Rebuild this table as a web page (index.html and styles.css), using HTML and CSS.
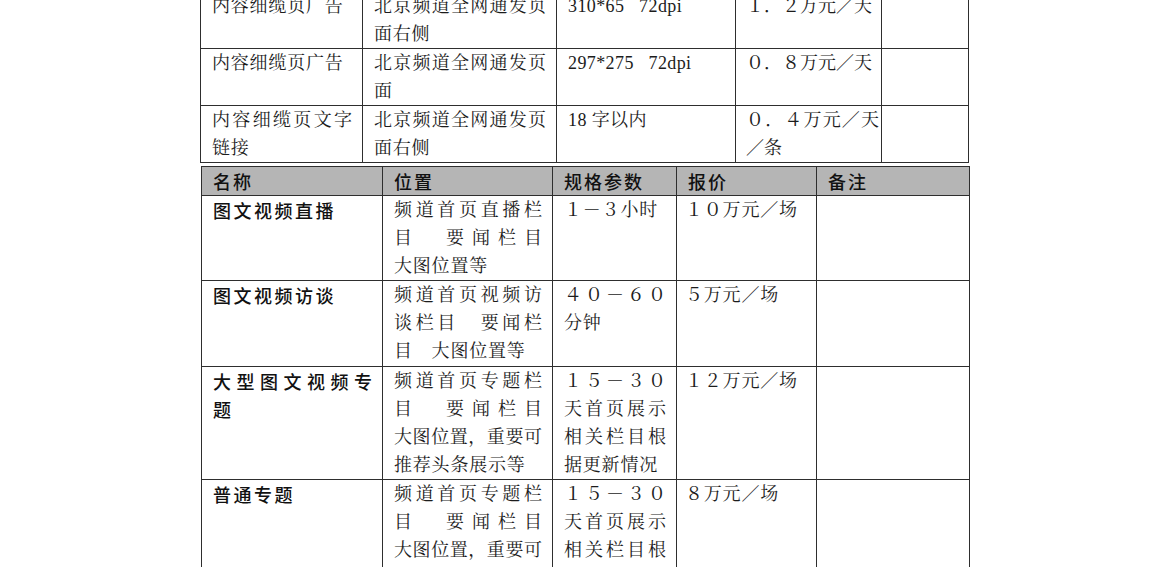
FILE: index.html
```html
<!DOCTYPE html>
<html lang="zh-CN">
<head>
<meta charset="utf-8">
<title>广告报价</title>
<link rel="stylesheet" href="styles.css">
</head>
<body>
<div class="page">
  <table class="t1">
    <colgroup>
      <col class="a1"><col class="a2"><col class="a3"><col class="a4"><col class="a5">
    </colgroup>
    <tr>
      <td>内容细缆页广告</td>
      <td><span class="j">北京频道全网通发页</span>面右侧</td>
      <td class="lat">310*65&nbsp;&nbsp; 72dpi</td>
      <td class="price">１．２万元／天</td>
      <td></td>
    </tr>
    <tr>
      <td>内容细缆页广告</td>
      <td><span class="j">北京频道全网通发页</span>面</td>
      <td class="lat">297*275&nbsp;&nbsp; 72dpi</td>
      <td class="price">０．８万元／天</td>
      <td></td>
    </tr>
    <tr>
      <td><span class="j">内容细缆页文字</span>链接</td>
      <td><span class="j">北京频道全网通发页</span>面右侧</td>
      <td class="lat">18 字以内</td>
      <td class="price"><span class="j">０．４万元／天</span>／条</td>
      <td></td>
    </tr>
  </table>

  <table class="t2">
    <colgroup>
      <col class="b1"><col class="b2"><col class="b3"><col class="b4"><col class="b5">
    </colgroup>
    <tr class="head">
      <th>名称</th><th>位置</th><th>规格参数</th><th>报价</th><th>备注</th>
    </tr>
    <tr>
      <td class="name">图文视频直播</td>
      <td><span class="j">频道首页直播栏</span><span class="j">目　要闻栏目</span>大图位置等</td>
      <td>１－３小时</td>
      <td class="fee">１０万元／场</td>
      <td></td>
    </tr>
    <tr>
      <td class="name">图文视频访谈</td>
      <td><span class="j">频道首页视频访</span><span class="j">谈栏目　要闻栏</span>目　大图位置等</td>
      <td><span class="j">４０－６０</span>分钟</td>
      <td class="fee">５万元／场</td>
      <td></td>
    </tr>
    <tr>
      <td class="name"><span class="j">大型图文视频专</span>题</td>
      <td><span class="j">频道首页专题栏</span><span class="j">目　要闻栏目</span><span class="j">大图位置，重要可</span>推荐头条展示等</td>
      <td><span class="j">１５－３０</span><span class="j">天首页展示</span><span class="j">相关栏目根</span>据更新情况</td>
      <td class="fee">１２万元／场</td>
      <td></td>
    </tr>
    <tr>
      <td class="name">普通专题</td>
      <td><span class="j">频道首页专题栏</span><span class="j">目　要闻栏目</span><span class="j">大图位置，重要可</span>推荐头条展示等</td>
      <td><span class="j">１５－３０</span><span class="j">天首页展示</span><span class="j">相关栏目根</span>据更新情况</td>
      <td class="fee">８万元／场</td>
      <td></td>
    </tr>
  </table>
</div>
</body>
</html>
```

FILE: styles.css
```css
html, body {
  margin: 0;
  padding: 0;
  background: #ffffff;
}

body {
  overflow: hidden;
  color: #1c1c1c;
  font-family: "Liberation Serif", "Noto Serif CJK SC", "Noto Sans CJK SC", serif;
  font-size: 18px;
}

.page {
  padding-left: 200px;
  margin-top: -9px;
}

table {
  border-collapse: collapse;
  table-layout: fixed;
}

td, th {
  border: 1px solid #2e2e2e;
  padding: 0 10px 0 11px;
  vertical-align: top;
  text-align: left;
  letter-spacing: 0.8px;
  font-weight: 400;
}

.t1 {
  width: 768px;
}

.t1 td {
  line-height: 28px;
}

.t1 td.price {
  padding: 0 2px 0 10px;
  letter-spacing: 0;
}

.a1 { width: 162px; }
.a2 { width: 194px; }
.a3 { width: 179px; }
.a4 { width: 146px; }
.a5 { width: 87px; }

.t2 {
  width: 768px;
  margin-top: 3px;
  margin-left: 1px;
}

.t2 td {
  line-height: 28.1px;
}

.t2 td.fee {
  padding-left: 8px;
}

.b1 { width: 181px; }
.b2 { width: 170px; }
.b3 { width: 124px; }
.b4 { width: 140px; }
.b5 { width: 153px; }

.head th {
  background: #b5b5b5;
  line-height: 28px;
  font-family: "Noto Sans CJK SC", sans-serif;
  font-weight: 500;
  letter-spacing: 2px;
  color: #111111;
}

.t2 td.name {
  font-family: "Noto Sans CJK SC", sans-serif;
  font-weight: 500;
  letter-spacing: 2.5px;
  color: #111111;
}

.j {
  display: block;
  letter-spacing: 0;
  text-align: justify;
  text-align-last: justify;
}

.lat {
  letter-spacing: 0.4px;
}
```
